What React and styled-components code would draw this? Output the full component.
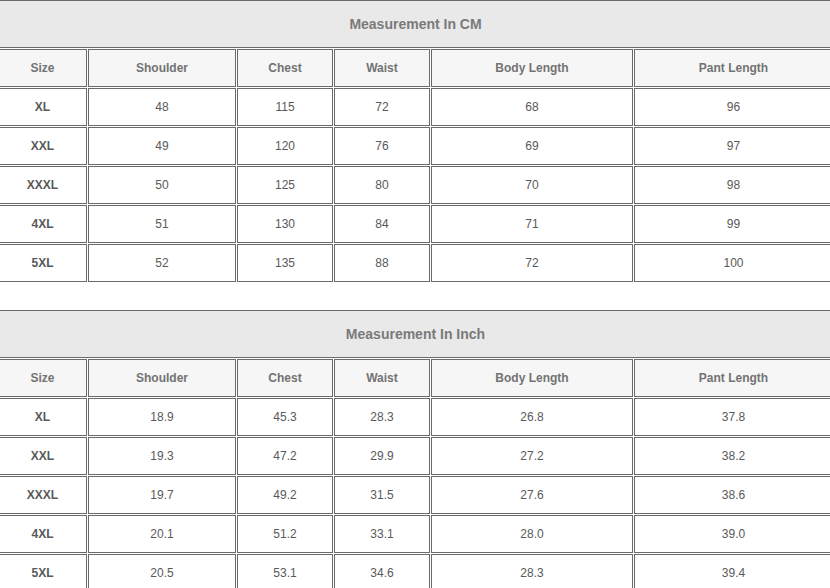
import React from "react";
import styled, { createGlobalStyle } from "styled-components";

const cols = ["Size", "Shoulder", "Chest", "Waist", "Body Length", "Pant Length"];

const cmRows = [
  ["XL", "48", "115", "72", "68", "96"],
  ["XXL", "49", "120", "76", "69", "97"],
  ["XXXL", "50", "125", "80", "70", "98"],
  ["4XL", "51", "130", "84", "71", "99"],
  ["5XL", "52", "135", "88", "72", "100"],
];

const inchRows = [
  ["XL", "18.9", "45.3", "28.3", "26.8", "37.8"],
  ["XXL", "19.3", "47.2", "29.9", "27.2", "38.2"],
  ["XXXL", "19.7", "49.2", "31.5", "27.6", "38.6"],
  ["4XL", "20.1", "51.2", "33.1", "28.0", "39.0"],
  ["5XL", "20.5", "53.1", "34.6", "28.3", "39.4"],
];

const SizeTable = ({ title, rows, first }) => {
  return (
    <Grid $first={first}>
      <Title>{title}</Title>
      {cols.map((c) => (
        <HeadCell key={c}>{c}</HeadCell>
      ))}
      {rows.map((r) =>
        r.map((v, i) => (
          <Cell key={r[0] + i} $bold={i === 0}>
            {v}
          </Cell>
        ))
      )}
    </Grid>
  );
};

const App = () => {
  return (
    <>
      <GlobalStyle />
      <Page>
        <SizeTable title="Measurement In CM" rows={cmRows} first />
        <SizeTable title="Measurement In Inch" rows={inchRows} />
      </Page>
    </>
  );
};

export default App;

const GlobalStyle = createGlobalStyle`
  * { box-sizing: border-box; }
  html, body {
    margin: 0;
    padding: 0;
    background: #fff;
    overflow: hidden;
  }
  body {
    font-family: "Liberation Sans", Arial, sans-serif;
  }
`;

const Page = styled.div`
  width: 830px;
  height: 588px;
  overflow: hidden;
`;

const Grid = styled.div`
  display: grid;
  grid-template-columns: 89px 148px 96px 96px 202px 199px;
  grid-template-rows: 48px repeat(6, 38px);
  gap: 1px;
  padding: 1px;
  width: 837px;
  margin-left: -3px;
  margin-top: ${(p) => (p.$first ? "-1px" : "26px")};
  background: #fff;
`;

const Title = styled.div`
  grid-column: 1 / -1;
  display: flex;
  align-items: center;
  justify-content: center;
  padding-bottom: 1px;
  background: #e9e9e9;
  border-top: 1px solid #6a6a6a;
  border-bottom: 1px solid #6a6a6a;
  color: #7a7a7a;
  font-size: 14px;
  font-weight: bold;
`;

const HeadCell = styled.div`
  display: flex;
  align-items: center;
  justify-content: center;
  background: #f6f6f6;
  border: 1px solid #6a6a6a;
  color: #737373;
  font-size: 12px;
  font-weight: bold;
`;

const Cell = styled.div`
  display: flex;
  align-items: center;
  justify-content: center;
  background: #fff;
  border: 1px solid #6a6a6a;
  color: #595959;
  font-size: 12px;
  font-weight: ${(p) => (p.$bold ? "bold" : "normal")};
`;
